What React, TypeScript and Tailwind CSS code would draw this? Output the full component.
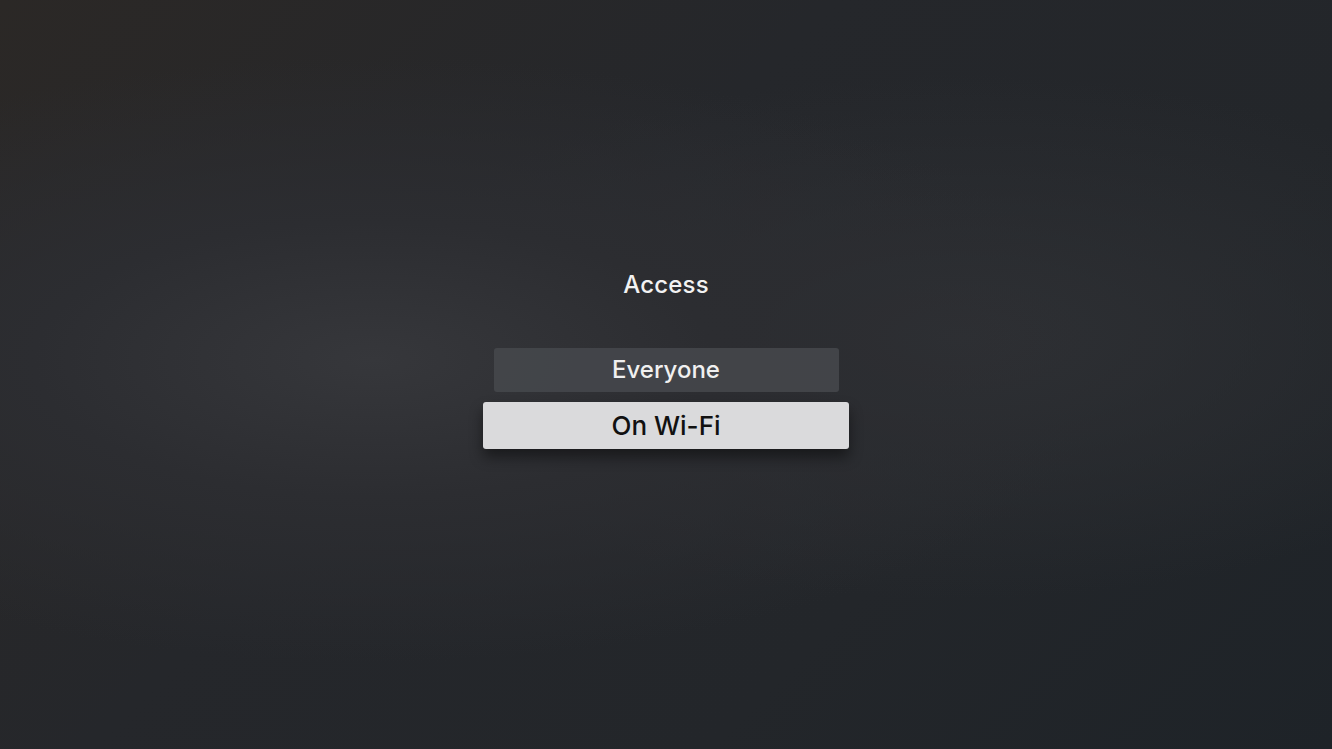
export default function App() {
  return (
    <div
      className="relative h-[749px] w-full overflow-hidden bg-[#25272b] font-['Inter','Liberation_Sans',sans-serif]"
    >
      {/* blurred backdrop */}
      <div className="absolute inset-0 bg-[radial-gradient(ellipse_at_28%_48%,#36373b_0%,#2c2d31_25%,rgba(37,39,43,0)_55%),radial-gradient(ellipse_at_72%_45%,#2e3034_0%,rgba(37,39,43,0)_45%),linear-gradient(135deg,#2b2826_0%,#25272b_40%,#23262a_70%,#1e2328_100%)]" />
      <div className="relative flex flex-col items-center pt-[269px]">
        <h1 className="text-[24px] leading-[32px] font-medium text-[#f2f2f2] tracking-[0.2px]">Access</h1>
        <div className="mt-[47px] flex flex-col items-center gap-[10px]">
          <button className="h-[44px] w-[345px] rounded-[3px] bg-[#45474b]/90 text-[24px] font-medium text-[#f0f0f0]">
            Everyone
          </button>
          <button className="h-[47px] w-[366px] rounded-[3px] bg-[#dadadc] text-[26px] font-medium text-[#111] shadow-[0_8px_14px_rgba(0,0,0,0.45)]">
            On Wi-Fi
          </button>
        </div>
      </div>
    </div>
  );
}
